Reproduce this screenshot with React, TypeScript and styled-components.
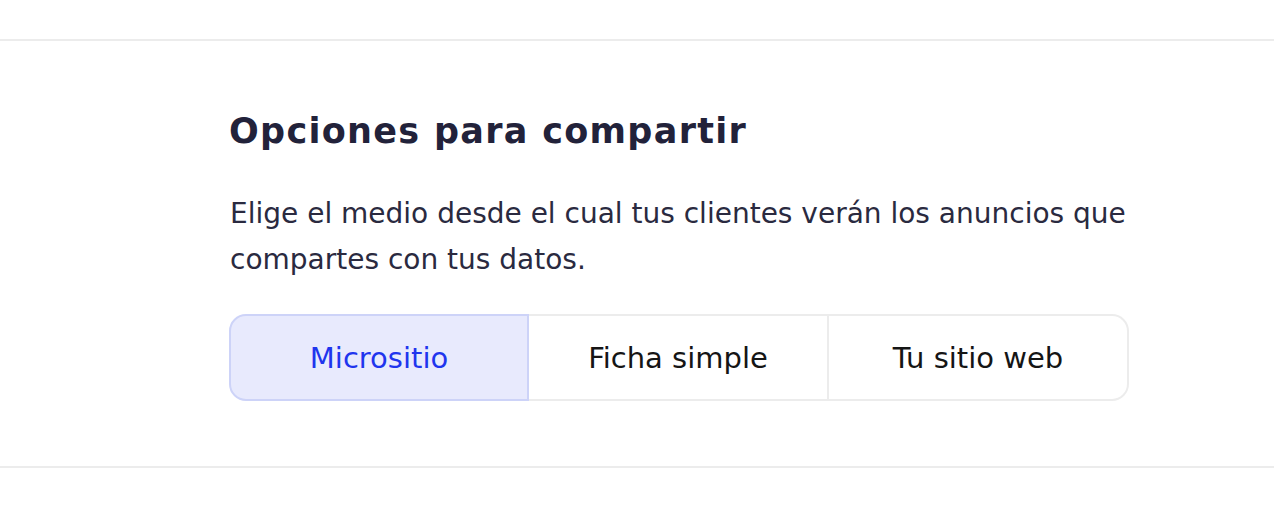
import React, { useState } from 'react';
import styled, { createGlobalStyle } from 'styled-components';

const GlobalStyle = createGlobalStyle`
  html, body {
    margin: 0;
    padding: 0;
    background: #ffffff;
  }
  body {
    font-family: "DejaVu Sans", Inter, sans-serif;
    -webkit-font-smoothing: antialiased;
  }
`;

const Page = styled.div`
  padding-top: 39px;
`;

const Section = styled.section`
  border-top: 2px solid #ececec;
  border-bottom: 2px solid #ececec;
  padding: 70px 0 65px 229px;
`;

const Content = styled.div`
  width: 900px;
`;

const Title = styled.h2`
  margin: 0;
  font-size: 35px;
  line-height: 40px;
  font-weight: 700;
  letter-spacing: 1.3px;
  color: #22223a;
`;

const Description = styled.p`
  margin: 40px 0 0;
  font-size: 28px;
  line-height: 46px;
  color: #2a2a40;
  padding-left: 1px;
`;

const Segmented = styled.div`
  margin-top: 31px;
  display: grid;
  grid-template-columns: repeat(3, 1fr);
  height: 87px;
`;

interface OptionProps {
  $active: boolean;
}

const Option = styled.button<OptionProps>`
  appearance: none;
  margin: 0;
  border: 2px solid ${p => (p.$active ? '#cdd3f8' : '#ececec')};
  border-left: none;
  background: ${p => (p.$active ? '#e8eafd' : '#ffffff')};
  color: ${p => (p.$active ? '#1f35ee' : '#151515')};
  font-family: inherit;
  font-size: 29px;
  cursor: pointer;
  &:first-child {
    border-left: 2px solid ${p => (p.$active ? '#cdd3f8' : '#ececec')};
    border-radius: 17px 0 0 17px;
  }
  &:last-child {
    border-radius: 0 17px 17px 0;
  }
`;

const options = ['Micrositio', 'Ficha simple', 'Tu sitio web'];

export default function App() {
  const [selected, setSelected] = useState(0);

  return (
    <>
      <GlobalStyle />
      <Page>
        <Section>
          <Content>
            <Title>Opciones para compartir</Title>
            <Description>
              Elige el medio desde el cual tus clientes verán los anuncios que compartes con tus datos.
            </Description>
            <Segmented>
              {options.map((label, i) => (
                <Option key={label} $active={i === selected} onClick={() => setSelected(i)}>
                  {label}
                </Option>
              ))}
            </Segmented>
          </Content>
        </Section>
      </Page>
    </>
  );
}
